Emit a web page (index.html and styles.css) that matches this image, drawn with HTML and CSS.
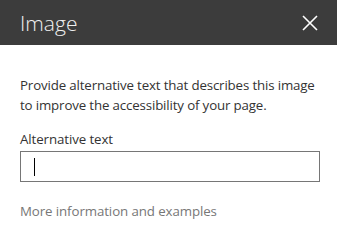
FILE: index.html
```html
<!DOCTYPE html>
<html>
<head>
<meta charset="utf-8">
<link rel="stylesheet" href="styles.css">
</head>
<body>
<div class="panel">
  <div class="header">
    <div class="title">Image</div>
    <svg class="close" width="16" height="16" viewBox="0 0 16 16"><path d="M1 1 L15 15 M15 1 L1 15" stroke="#fff" stroke-width="1.6" fill="none"/></svg>
  </div>
  <div class="content">
    <p class="desc">Provide alternative text that describes this image to improve the accessibility of your page.</p>
    <div class="label">Alternative text</div>
    <div class="input"><span class="caret"></span></div>
    <div class="more">More information and examples</div>
  </div>
</div>
</body>
</html>
```
FILE: styles.css
```css
html, body { margin: 0; padding: 0; background: #fff; }
body { font-family: "Open Sans", "Noto Sans", sans-serif; color: #333; }
.panel { width: 337px; height: 242px; }
.header {
  height: 45px;
  background: #3c3c3c;
  display: flex;
  align-items: center;
  justify-content: space-between;
  padding: 0 19px 0 20px;
  box-sizing: border-box;
}
.title { color: #f0f0f0; font-size: 21px; font-weight: 300; line-height: 1; margin-top: 2px; }
.close { display: block; margin-top: 1px; }
.content { padding: 0 17px 0 20px; }
.desc { margin: 30px 0 0; font-size: 13.3px; line-height: 20px; color: #333; letter-spacing: -0.15px; margin-right: -4px; }
.label { margin-top: 14px; font-size: 13.3px; line-height: 20px; color: #333; letter-spacing: -0.1px; }
.input {
  margin-top: 2px;
  height: 31px;
  box-sizing: border-box;
  border: 1px solid #767676;
  display: flex;
  align-items: center;
  padding-left: 13px;
}
.caret { width: 1px; height: 18px; background: #000; }
.more { margin-top: 19px; font-size: 13.3px; line-height: 20px; color: #777; letter-spacing: -0.1px; }
```
